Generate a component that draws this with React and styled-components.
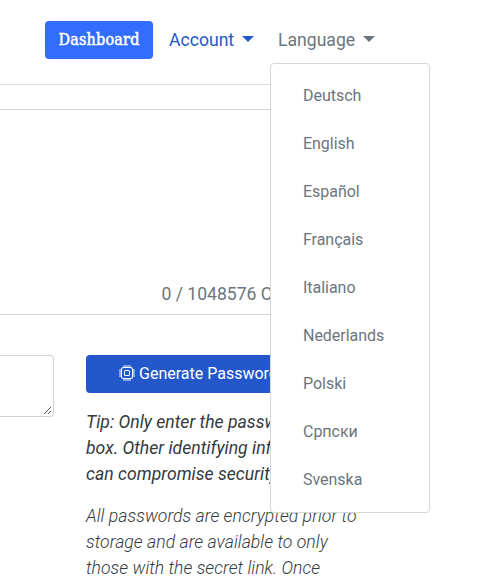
import React from "react";
import styled, { createGlobalStyle } from "styled-components";
import { BsCpu } from "react-icons/bs";

const GlobalStyle = createGlobalStyle`
  * { box-sizing: border-box; }
  body {
    margin: 0;
    background: #fff;
    color: #343a40;
    font-family: Roboto, "Liberation Sans", sans-serif;
    overflow: hidden;
  }
`;

const Page = styled.div`
  width: 488px;
  height: 579px;
  padding-right: 88px;
  overflow: hidden;
`;

const Navbar = styled.nav`
  display: flex;
  align-items: flex-start;
  height: 85px;
  padding: 21px 0 0 45px;
  border-bottom: 1px solid #dcdee0;
`;

const DashboardButton = styled.a`
  width: 108px;
  height: 38px;
  margin-right: 16px;
  border-radius: 4px;
  background: #316dff;
  color: #fff;
  font: normal 16px/38px "DejaVu Serif Condensed", "DejaVu Serif", serif;
  font-stretch: condensed;
  letter-spacing: 0.2px;
  text-align: center;
  -webkit-text-stroke: 0.5px #fff;
`;

const NavItem = styled.div`
  position: relative;
  flex: 0 0 ${(p) => p.$width}px;
`;

const NavLink = styled.a`
  display: flex;
  align-items: center;
  height: 38px;
  color: ${(p) => (p.$muted ? "#6c757d" : "#2458ca")};
  font-size: 17.6px;
  line-height: 26px;

  &::after {
    content: "";
    margin: -3px 0 0 8px;
    border: 6px solid transparent;
    border-top-color: currentColor;
    border-bottom: 0;
  }
`;

const Menu = styled.ul`
  position: absolute;
  top: 42px;
  left: -8px;
  z-index: 2;
  width: 160px;
  height: 450px;
  margin: 0;
  padding: 8px 0;
  border: 1px solid #d4d6d8;
  border-radius: 4px;
  background: #fff;
  list-style: none;
`;

const MenuItem = styled.li`
  height: 48px;
  padding-left: 32px;
  color: #6c757d;
  font-size: 16px;
  letter-spacing: -0.03px;
  line-height: 47px;
`;

const SecretField = styled.section`
  display: flex;
  align-items: flex-end;
  height: 206px;
  margin-top: 24px;
  padding: 0 0 7px 161.5px;
  border: solid #ced4da;
  border-width: 1px 0;
`;

const Counter = styled.span`
  color: #6c757d;
  font-size: 17.6px;
  letter-spacing: -0.02px;
  line-height: 26px;
  white-space: nowrap;
`;

const Columns = styled.main`
  display: grid;
  grid-template-columns: 54px 290px;
  column-gap: 32px;
  align-items: start;
  margin-top: 40px;
`;

const NoteBox = styled.div`
  display: flex;
  align-items: flex-end;
  justify-content: flex-end;
  height: 62px;
  padding: 0 1px 1px 0;
  border: 1px solid #ced4da;
  border-left: 0;
  border-radius: 0 4px 4px 0;
`;

const GenerateButton = styled.button`
  display: flex;
  align-items: center;
  width: 100%;
  height: 38px;
  padding: 0 0 2px 33px;
  border: 0;
  border-radius: 4px;
  background: #2458ca;
  color: #fff;
  font: 16px Roboto, sans-serif;
  white-space: nowrap;

  svg { margin: -1px 4px 0 0; }
`;

const Note = styled.p`
  margin: 16px 0 0;
  font-size: 17.6px;
  font-style: italic;
  font-weight: ${(p) => p.$weight};
  letter-spacing: ${(p) => (p.$weight === 300 ? "0.05px" : "0.01px")};
  line-height: 26px;
  white-space: nowrap;
`;

const languages = [
  "Deutsch", "English", "Español", "Français", "Italiano",
  "Nederlands", "Polski", "Српски", "Svenska",
];

export default function App() {
  return (
    <Page>
      <GlobalStyle />
      <Navbar>
        <DashboardButton>Dashboard</DashboardButton>
        <NavItem $width={109}><NavLink>Account</NavLink></NavItem>
        <NavItem $width={97}>
          <NavLink $muted>Language</NavLink>
          <Menu>
            {languages.map((name) => <MenuItem key={name}>{name}</MenuItem>)}
          </Menu>
        </NavItem>
      </Navbar>
      <SecretField><Counter>0 / 1048576 C</Counter></SecretField>
      <Columns>
        <NoteBox>
          <svg width="9" height="9" viewBox="0 0 9 9" stroke="#555" strokeWidth="1">
            <path d="M1 8L8 1M5 8L8 5" />
          </svg>
        </NoteBox>
        <div>
          <GenerateButton><BsCpu size={16} />Generate Password</GenerateButton>
          <Note $weight={400}>
            Tip: Only enter the passw<br />
            box. Other identifying inf<br />
            can compromise security
          </Note>
          <Note $weight={300}>
            All passwords are encrypted prior to<br />
            storage and are available to only<br />
            those with the secret link. Once
          </Note>
        </div>
      </Columns>
    </Page>
  );
}
